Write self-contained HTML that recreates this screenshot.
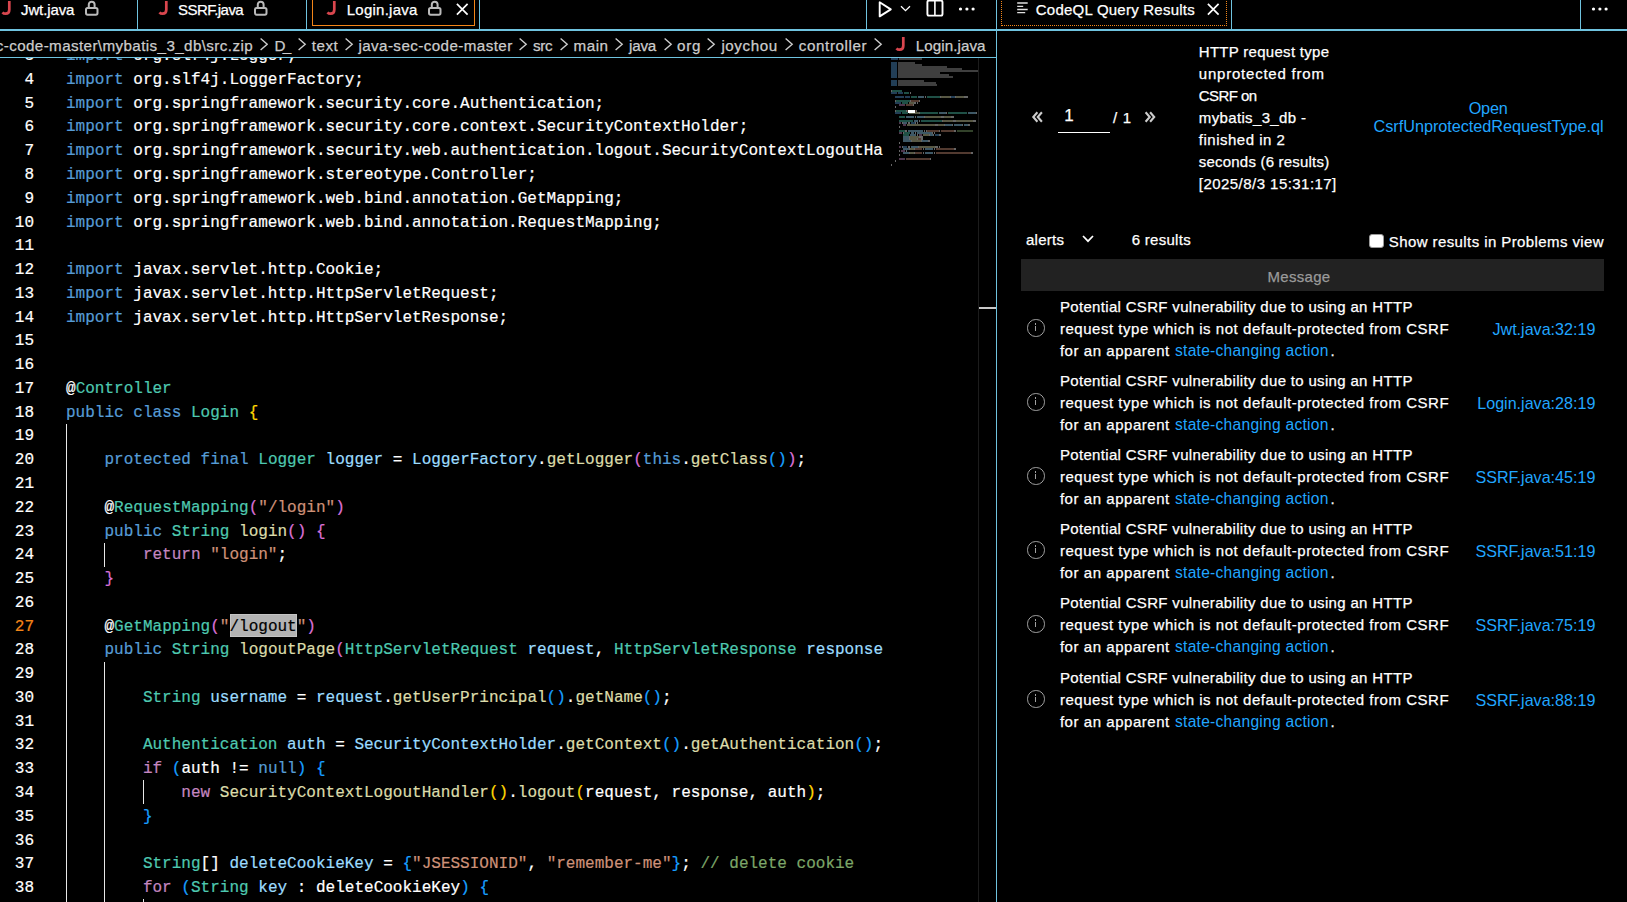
<!DOCTYPE html>
<html><head><meta charset="utf-8"><style>*{margin:0;padding:0;box-sizing:border-box}
html,body{width:1627px;height:902px;overflow:hidden;background:#000;font-family:"Liberation Sans",sans-serif;color:#fff}
.a{position:absolute}
.t{position:absolute;white-space:pre;-webkit-text-stroke:0.25px currentColor}
.ln{position:absolute;left:0;width:34px;text-align:right;font-family:"Liberation Mono",monospace;font-size:16.03px;line-height:23.75px;height:23.75px;white-space:pre;-webkit-text-stroke:0.2px currentColor}
.cl{position:absolute;left:66px;font-family:"Liberation Mono",monospace;font-size:16.03px;line-height:23.75px;height:23.75px;white-space:pre;-webkit-text-stroke:0.2px currentColor}
.sel{background:#B3B3B3;color:#000;box-shadow:inset 0 0 0 1px #C4C4C4}
.ig{position:absolute;width:1px;background:#E8E8E8}
#editor{position:absolute;left:0;top:58px;width:883px;height:844px;overflow:hidden}
#mm i{position:absolute;height:2px}
.dot{border:1px dotted #F38518}
.info{position:absolute;width:17.5px;height:17.5px;border:1.4px solid #a0a0a0;border-radius:50%}
.info:before{content:"";position:absolute;left:6.9px;top:5.8px;width:1.3px;height:5.5px;background:#a0a0a0}
.info:after{content:"";position:absolute;left:6.9px;top:3.3px;width:1.3px;height:1.3px;background:#a0a0a0}
</style></head><body>
<svg class="a" style="left:0.5px;top:0.0px" width="11" height="17" viewBox="0 0 11 17"><path d="M8.3 0.9V9.8Q8.3 13.7 4.6 13.7Q2.6 13.7 1.5 12.3" fill="none" stroke="#D9464E" stroke-width="2.7"/></svg>
<div class="t" style="left:21.00px;top:0.36px;font-size:15.0px;line-height:19px;letter-spacing:-0.114px;color:#fff;">Jwt.java</div>
<svg class="a" style="left:84.9px;top:0px" width="15" height="17" viewBox="0 0 15 17"><rect x="1" y="7.9" width="11.5" height="6.8" rx="1.6" fill="none" stroke="#BABABA" stroke-width="2"/><path d="M3.8 7.9V4.6A2.9 2.9 0 0 1 9.6 4.6V7.9" fill="none" stroke="#BABABA" stroke-width="2"/></svg>
<div class="a" style="left:137px;top:0px;width:1px;height:29px;background:#6FC3DF;"></div>
<svg class="a" style="left:157.5px;top:0.0px" width="11" height="17" viewBox="0 0 11 17"><path d="M8.3 0.9V9.8Q8.3 13.7 4.6 13.7Q2.6 13.7 1.5 12.3" fill="none" stroke="#D9464E" stroke-width="2.7"/></svg>
<div class="t" style="left:178.00px;top:0.36px;font-size:15.0px;line-height:19px;letter-spacing:-0.542px;color:#fff;">SSRF.java</div>
<svg class="a" style="left:253.5px;top:0px" width="15" height="17" viewBox="0 0 15 17"><rect x="1" y="7.9" width="11.5" height="6.8" rx="1.6" fill="none" stroke="#BABABA" stroke-width="2"/><path d="M3.8 7.9V4.6A2.9 2.9 0 0 1 9.6 4.6V7.9" fill="none" stroke="#BABABA" stroke-width="2"/></svg>
<div class="a" style="left:306px;top:0px;width:1px;height:29px;background:#6FC3DF;"></div>
<div class="a" style="left:312px;top:-2px;width:163px;height:28px;border:1px solid #F38518"></div>
<svg class="a" style="left:326.3px;top:0.0px" width="11" height="17" viewBox="0 0 11 17"><path d="M8.3 0.9V9.8Q8.3 13.7 4.6 13.7Q2.6 13.7 1.5 12.3" fill="none" stroke="#D9464E" stroke-width="2.7"/></svg>
<div class="t" style="left:346.70px;top:0.36px;font-size:15.0px;line-height:19px;letter-spacing:0.256px;color:#fff;">Login.java</div>
<svg class="a" style="left:427.8px;top:0px" width="15" height="17" viewBox="0 0 15 17"><rect x="1" y="7.9" width="11.5" height="6.8" rx="1.6" fill="none" stroke="#BABABA" stroke-width="2"/><path d="M3.8 7.9V4.6A2.9 2.9 0 0 1 9.6 4.6V7.9" fill="none" stroke="#BABABA" stroke-width="2"/></svg>
<svg class="a" style="left:455.5px;top:2.5px" width="13" height="13" viewBox="0 0 13 13"><path d="M0.9 0.9L11.6 11.6M11.6 0.9L0.9 11.6" stroke="#fff" stroke-width="1.7"/></svg>
<div class="a" style="left:479px;top:0px;width:1px;height:29px;background:#6FC3DF;"></div>
<div class="a" style="left:866px;top:0px;width:1px;height:29px;background:#6FC3DF;"></div>
<svg class="a" style="left:872px;top:0px" width="75" height="19" viewBox="0 0 75 19"><path d="M7.7 2.3V16.4L18.8 9.35Z" fill="none" stroke="#fff" stroke-width="1.9" stroke-linejoin="round"/><path d="M29 6.3L33.5 10.7L38 6.3" fill="none" stroke="#fff" stroke-width="1.3"/><rect x="55.4" y="0.6" width="15.1" height="15" rx="1.6" fill="none" stroke="#fff" stroke-width="1.9"/><path d="M62.9 0.6V15.6" stroke="#fff" stroke-width="1.6"/></svg>
<svg class="a" style="left:955px;top:5px" width="22" height="8" viewBox="0 0 22 8"><circle cx="5.5" cy="4" r="1.6" fill="#fff"/><circle cx="11.9" cy="4" r="1.6" fill="#fff"/><circle cx="18.1" cy="4" r="1.6" fill="#fff"/></svg>
<div class="a" style="left:0px;top:29px;width:1627px;height:2px;background:#6FC3DF;"></div>
<div class="t" style="left:-4.30px;top:36.23px;font-size:15.2px;line-height:19px;letter-spacing:0.393px;color:#CCCCCC;">c-code-master\mybatis_3_db\src.zip</div>
<div class="t" style="left:274.40px;top:36.23px;font-size:15.2px;line-height:19px;letter-spacing:-2.508px;color:#CCCCCC;">D_</div>
<div class="t" style="left:311.80px;top:36.23px;font-size:15.2px;line-height:19px;letter-spacing:0.499px;color:#CCCCCC;">text</div>
<div class="t" style="left:358.38px;top:36.23px;font-size:15.2px;line-height:19px;letter-spacing:0.415px;color:#CCCCCC;">java-sec-code-master</div>
<div class="t" style="left:533.00px;top:36.23px;font-size:15.2px;line-height:19px;letter-spacing:-0.281px;color:#CCCCCC;">src</div>
<div class="t" style="left:573.60px;top:36.23px;font-size:15.2px;line-height:19px;letter-spacing:0.482px;color:#CCCCCC;">main</div>
<div class="t" style="left:629.08px;top:36.23px;font-size:15.2px;line-height:19px;letter-spacing:-0.257px;color:#CCCCCC;">java</div>
<div class="t" style="left:676.90px;top:36.23px;font-size:15.2px;line-height:19px;letter-spacing:0.818px;color:#CCCCCC;">org</div>
<div class="t" style="left:721.38px;top:36.23px;font-size:15.2px;line-height:19px;letter-spacing:0.571px;color:#CCCCCC;">joychou</div>
<div class="t" style="left:798.80px;top:36.23px;font-size:15.2px;line-height:19px;letter-spacing:0.598px;color:#CCCCCC;">controller</div>
<div class="t" style="left:915.80px;top:36.23px;font-size:15.2px;line-height:19px;letter-spacing:0.054px;color:#CCCCCC;">Login.java</div>
<svg class="a" style="left:258.7px;top:36.8px" width="9.8" height="14.6" viewBox="-1 -1 9.8 14.6"><path d="M0.6 0.5L7.2 6.3L0.6 12.1" fill="none" stroke="#CCCCCC" stroke-width="1.4"/></svg>
<svg class="a" style="left:297px;top:36.8px" width="9.8" height="14.6" viewBox="-1 -1 9.8 14.6"><path d="M0.6 0.5L7.2 6.3L0.6 12.1" fill="none" stroke="#CCCCCC" stroke-width="1.4"/></svg>
<svg class="a" style="left:344.2px;top:36.8px" width="9.8" height="14.6" viewBox="-1 -1 9.8 14.6"><path d="M0.6 0.5L7.2 6.3L0.6 12.1" fill="none" stroke="#CCCCCC" stroke-width="1.4"/></svg>
<svg class="a" style="left:518.3px;top:36.8px" width="9.8" height="14.6" viewBox="-1 -1 9.8 14.6"><path d="M0.6 0.5L7.2 6.3L0.6 12.1" fill="none" stroke="#CCCCCC" stroke-width="1.4"/></svg>
<svg class="a" style="left:558.8px;top:36.8px" width="9.8" height="14.6" viewBox="-1 -1 9.8 14.6"><path d="M0.6 0.5L7.2 6.3L0.6 12.1" fill="none" stroke="#CCCCCC" stroke-width="1.4"/></svg>
<svg class="a" style="left:614px;top:36.8px" width="9.8" height="14.6" viewBox="-1 -1 9.8 14.6"><path d="M0.6 0.5L7.2 6.3L0.6 12.1" fill="none" stroke="#CCCCCC" stroke-width="1.4"/></svg>
<svg class="a" style="left:663px;top:36.8px" width="9.8" height="14.6" viewBox="-1 -1 9.8 14.6"><path d="M0.6 0.5L7.2 6.3L0.6 12.1" fill="none" stroke="#CCCCCC" stroke-width="1.4"/></svg>
<svg class="a" style="left:706.4px;top:36.8px" width="9.8" height="14.6" viewBox="-1 -1 9.8 14.6"><path d="M0.6 0.5L7.2 6.3L0.6 12.1" fill="none" stroke="#CCCCCC" stroke-width="1.4"/></svg>
<svg class="a" style="left:784px;top:36.8px" width="9.8" height="14.6" viewBox="-1 -1 9.8 14.6"><path d="M0.6 0.5L7.2 6.3L0.6 12.1" fill="none" stroke="#CCCCCC" stroke-width="1.4"/></svg>
<svg class="a" style="left:873.2px;top:36.8px" width="9.8" height="14.6" viewBox="-1 -1 9.8 14.6"><path d="M0.6 0.5L7.2 6.3L0.6 12.1" fill="none" stroke="#CCCCCC" stroke-width="1.4"/></svg>
<svg class="a" style="left:894.5px;top:36.0px" width="11" height="17" viewBox="0 0 11 17"><path d="M8.3 0.9V9.8Q8.3 13.7 4.6 13.7Q2.6 13.7 1.5 12.3" fill="none" stroke="#D9464E" stroke-width="2.7"/></svg>
<div class="a" style="left:0px;top:57px;width:996px;height:1px;background:#6FC3DF;"></div>
<div id="editor"><div style="position:absolute;left:0;top:-58px;width:884px;height:902px">
<div class="sel" style="position:absolute;left:230px;top:614px;width:67px;height:23px"></div>
<div class="ln" style="top:45.13px;color:#FFFFFF">3</div>
<div class="cl" style="top:45.13px"><span style="color:#569CD6">import</span><span style="color:#FFFFFF"> org.slf4j.Logger;</span></div>
<div class="ln" style="top:68.90px;color:#FFFFFF">4</div>
<div class="cl" style="top:68.90px"><span style="color:#569CD6">import</span><span style="color:#FFFFFF"> org.slf4j.LoggerFactory;</span></div>
<div class="ln" style="top:92.67px;color:#FFFFFF">5</div>
<div class="cl" style="top:92.67px"><span style="color:#569CD6">import</span><span style="color:#FFFFFF"> org.springframework.security.core.Authentication;</span></div>
<div class="ln" style="top:116.44px;color:#FFFFFF">6</div>
<div class="cl" style="top:116.44px"><span style="color:#569CD6">import</span><span style="color:#FFFFFF"> org.springframework.security.core.context.SecurityContextHolder;</span></div>
<div class="ln" style="top:140.21px;color:#FFFFFF">7</div>
<div class="cl" style="top:140.21px"><span style="color:#569CD6">import</span><span style="color:#FFFFFF"> org.springframework.security.web.authentication.logout.SecurityContextLogoutHandler;</span></div>
<div class="ln" style="top:163.98px;color:#FFFFFF">8</div>
<div class="cl" style="top:163.98px"><span style="color:#569CD6">import</span><span style="color:#FFFFFF"> org.springframework.stereotype.Controller;</span></div>
<div class="ln" style="top:187.75px;color:#FFFFFF">9</div>
<div class="cl" style="top:187.75px"><span style="color:#569CD6">import</span><span style="color:#FFFFFF"> org.springframework.web.bind.annotation.GetMapping;</span></div>
<div class="ln" style="top:211.52px;color:#FFFFFF">10</div>
<div class="cl" style="top:211.52px"><span style="color:#569CD6">import</span><span style="color:#FFFFFF"> org.springframework.web.bind.annotation.RequestMapping;</span></div>
<div class="ln" style="top:235.29px;color:#FFFFFF">11</div>
<div class="ln" style="top:259.06px;color:#FFFFFF">12</div>
<div class="cl" style="top:259.06px"><span style="color:#569CD6">import</span><span style="color:#FFFFFF"> javax.servlet.http.Cookie;</span></div>
<div class="ln" style="top:282.83px;color:#FFFFFF">13</div>
<div class="cl" style="top:282.83px"><span style="color:#569CD6">import</span><span style="color:#FFFFFF"> javax.servlet.http.HttpServletRequest;</span></div>
<div class="ln" style="top:306.60px;color:#FFFFFF">14</div>
<div class="cl" style="top:306.60px"><span style="color:#569CD6">import</span><span style="color:#FFFFFF"> javax.servlet.http.HttpServletResponse;</span></div>
<div class="ln" style="top:330.37px;color:#FFFFFF">15</div>
<div class="ln" style="top:354.14px;color:#FFFFFF">16</div>
<div class="ln" style="top:377.91px;color:#FFFFFF">17</div>
<div class="cl" style="top:377.91px"><span style="color:#FFFFFF">@</span><span style="color:#4EC9B0">Controller</span></div>
<div class="ln" style="top:401.68px;color:#FFFFFF">18</div>
<div class="cl" style="top:401.68px"><span style="color:#569CD6">public</span><span style="color:#FFFFFF"> </span><span style="color:#569CD6">class</span><span style="color:#FFFFFF"> </span><span style="color:#4EC9B0">Login</span><span style="color:#FFFFFF"> </span><span style="color:#FFD700">{</span></div>
<div class="ln" style="top:425.45px;color:#FFFFFF">19</div>
<div class="ln" style="top:449.22px;color:#FFFFFF">20</div>
<div class="cl" style="top:449.22px"><span style="color:#FFFFFF">    </span><span style="color:#569CD6">protected</span><span style="color:#FFFFFF"> </span><span style="color:#569CD6">final</span><span style="color:#FFFFFF"> </span><span style="color:#4EC9B0">Logger</span><span style="color:#FFFFFF"> </span><span style="color:#9CDCFE">logger</span><span style="color:#FFFFFF"> = </span><span style="color:#9CDCFE">LoggerFactory</span><span style="color:#FFFFFF">.</span><span style="color:#DCDCAA">getLogger</span><span style="color:#DA70D6">(</span><span style="color:#569CD6">this</span><span style="color:#FFFFFF">.</span><span style="color:#DCDCAA">getClass</span><span style="color:#179FFF">()</span><span style="color:#DA70D6">)</span><span style="color:#FFFFFF">;</span></div>
<div class="ln" style="top:472.99px;color:#FFFFFF">21</div>
<div class="ln" style="top:496.76px;color:#FFFFFF">22</div>
<div class="cl" style="top:496.76px"><span style="color:#FFFFFF">    </span><span style="color:#FFFFFF">@</span><span style="color:#4EC9B0">RequestMapping</span><span style="color:#DA70D6">(</span><span style="color:#CE9178">&quot;/login&quot;</span><span style="color:#DA70D6">)</span></div>
<div class="ln" style="top:520.53px;color:#FFFFFF">23</div>
<div class="cl" style="top:520.53px"><span style="color:#FFFFFF">    </span><span style="color:#569CD6">public</span><span style="color:#FFFFFF"> </span><span style="color:#4EC9B0">String</span><span style="color:#FFFFFF"> </span><span style="color:#DCDCAA">login</span><span style="color:#DA70D6">()</span><span style="color:#FFFFFF"> </span><span style="color:#DA70D6">{</span></div>
<div class="ln" style="top:544.30px;color:#FFFFFF">24</div>
<div class="cl" style="top:544.30px"><span style="color:#FFFFFF">        </span><span style="color:#C586C0">return</span><span style="color:#FFFFFF"> </span><span style="color:#CE9178">&quot;login&quot;</span><span style="color:#FFFFFF">;</span></div>
<div class="ln" style="top:568.07px;color:#FFFFFF">25</div>
<div class="cl" style="top:568.07px"><span style="color:#FFFFFF">    </span><span style="color:#DA70D6">}</span></div>
<div class="ln" style="top:591.84px;color:#FFFFFF">26</div>
<div class="ln" style="top:615.61px;color:#F38518">27</div>
<div class="cl" style="top:615.61px"><span style="color:#FFFFFF">    </span><span style="color:#FFFFFF">@</span><span style="color:#4EC9B0">GetMapping</span><span style="color:#DA70D6">(</span><span style="color:#CE9178">&quot;</span><span style="color:#000">/logout</span><span style="color:#CE9178">&quot;</span><span style="color:#DA70D6">)</span></div>
<div class="ln" style="top:639.38px;color:#FFFFFF">28</div>
<div class="cl" style="top:639.38px"><span style="color:#FFFFFF">    </span><span style="color:#569CD6">public</span><span style="color:#FFFFFF"> </span><span style="color:#4EC9B0">String</span><span style="color:#FFFFFF"> </span><span style="color:#DCDCAA">logoutPage</span><span style="color:#DA70D6">(</span><span style="color:#4EC9B0">HttpServletRequest</span><span style="color:#FFFFFF"> </span><span style="color:#9CDCFE">request</span><span style="color:#FFFFFF">, </span><span style="color:#4EC9B0">HttpServletResponse</span><span style="color:#FFFFFF"> </span><span style="color:#9CDCFE">response</span><span style="color:#DA70D6">)</span><span style="color:#FFFFFF"> </span><span style="color:#DA70D6">{</span></div>
<div class="ln" style="top:663.15px;color:#FFFFFF">29</div>
<div class="ln" style="top:686.92px;color:#FFFFFF">30</div>
<div class="cl" style="top:686.92px"><span style="color:#FFFFFF">        </span><span style="color:#4EC9B0">String</span><span style="color:#FFFFFF"> </span><span style="color:#9CDCFE">username</span><span style="color:#FFFFFF"> = </span><span style="color:#9CDCFE">request</span><span style="color:#FFFFFF">.</span><span style="color:#DCDCAA">getUserPrincipal</span><span style="color:#179FFF">()</span><span style="color:#FFFFFF">.</span><span style="color:#DCDCAA">getName</span><span style="color:#179FFF">()</span><span style="color:#FFFFFF">;</span></div>
<div class="ln" style="top:710.69px;color:#FFFFFF">31</div>
<div class="ln" style="top:734.46px;color:#FFFFFF">32</div>
<div class="cl" style="top:734.46px"><span style="color:#FFFFFF">        </span><span style="color:#4EC9B0">Authentication</span><span style="color:#FFFFFF"> </span><span style="color:#9CDCFE">auth</span><span style="color:#FFFFFF"> = </span><span style="color:#9CDCFE">SecurityContextHolder</span><span style="color:#FFFFFF">.</span><span style="color:#DCDCAA">getContext</span><span style="color:#179FFF">()</span><span style="color:#FFFFFF">.</span><span style="color:#DCDCAA">getAuthentication</span><span style="color:#179FFF">()</span><span style="color:#FFFFFF">;</span></div>
<div class="ln" style="top:758.23px;color:#FFFFFF">33</div>
<div class="cl" style="top:758.23px"><span style="color:#FFFFFF">        </span><span style="color:#C586C0">if</span><span style="color:#FFFFFF"> </span><span style="color:#179FFF">(</span><span style="color:#FFFFFF">auth != </span><span style="color:#569CD6">null</span><span style="color:#179FFF">)</span><span style="color:#FFFFFF"> </span><span style="color:#179FFF">{</span></div>
<div class="ln" style="top:782.00px;color:#FFFFFF">34</div>
<div class="cl" style="top:782.00px"><span style="color:#FFFFFF">            </span><span style="color:#C586C0">new</span><span style="color:#FFFFFF"> </span><span style="color:#DCDCAA">SecurityContextLogoutHandler</span><span style="color:#FFD700">()</span><span style="color:#FFFFFF">.</span><span style="color:#DCDCAA">logout</span><span style="color:#FFD700">(</span><span style="color:#FFFFFF">request, response, auth</span><span style="color:#FFD700">)</span><span style="color:#FFFFFF">;</span></div>
<div class="ln" style="top:805.77px;color:#FFFFFF">35</div>
<div class="cl" style="top:805.77px"><span style="color:#FFFFFF">        </span><span style="color:#179FFF">}</span></div>
<div class="ln" style="top:829.54px;color:#FFFFFF">36</div>
<div class="ln" style="top:853.31px;color:#FFFFFF">37</div>
<div class="cl" style="top:853.31px"><span style="color:#FFFFFF">        </span><span style="color:#4EC9B0">String</span><span style="color:#FFFFFF">[] </span><span style="color:#9CDCFE">deleteCookieKey</span><span style="color:#FFFFFF"> = </span><span style="color:#179FFF">{</span><span style="color:#CE9178">&quot;JSESSIONID&quot;</span><span style="color:#FFFFFF">, </span><span style="color:#CE9178">&quot;remember-me&quot;</span><span style="color:#179FFF">}</span><span style="color:#FFFFFF">; </span><span style="color:#7CA668">// delete cookie</span></div>
<div class="ln" style="top:877.08px;color:#FFFFFF">38</div>
<div class="cl" style="top:877.08px"><span style="color:#FFFFFF">        </span><span style="color:#C586C0">for</span><span style="color:#FFFFFF"> </span><span style="color:#179FFF">(</span><span style="color:#4EC9B0">String</span><span style="color:#FFFFFF"> </span><span style="color:#9CDCFE">key</span><span style="color:#FFFFFF"> : </span><span style="color:#FFFFFF">deleteCookieKey</span><span style="color:#179FFF">)</span><span style="color:#FFFFFF"> </span><span style="color:#179FFF">{</span></div>
<div class="ln" style="top:900.85px;color:#FFFFFF">39</div>
<div class="cl" style="top:900.85px"><span style="color:#FFFFFF">            </span><span style="color:#4EC9B0">Cookie</span><span style="color:#FFFFFF"> </span><span style="color:#9CDCFE">cookie</span><span style="color:#FFFFFF"> = </span><span style="color:#C586C0">new</span><span style="color:#FFFFFF"> </span><span style="color:#DCDCAA">Cookie</span><span style="color:#FFD700">(</span><span style="color:#FFFFFF">key, </span><span style="color:#569CD6">null</span><span style="color:#FFD700">)</span><span style="color:#FFFFFF">;</span></div>
<div class="ig" style="left:66px;top:424px;height:478px"></div>
<div class="ig" style="left:104px;top:543px;height:24px"></div>
<div class="ig" style="left:104px;top:662px;height:240px"></div>
<div class="ig" style="left:143px;top:780px;height:24px"></div>
<div class="ig" style="left:143px;top:899px;height:3px"></div>
</div></div>
<div id="mm"><i style="left:891px;top:58px;width:7px;background:#569CD6;opacity:0.4"></i><i style="left:899px;top:58px;width:3px;background:#d0d0d0;opacity:0.3"></i><i style="left:902px;top:58px;width:1px;background:#d0d0d0;opacity:0.3"></i><i style="left:903px;top:58px;width:7px;background:#d0d0d0;opacity:0.3"></i><i style="left:910px;top:58px;width:1px;background:#d0d0d0;opacity:0.3"></i><i style="left:911px;top:58px;width:10px;background:#d0d0d0;opacity:0.3"></i><i style="left:921px;top:58px;width:1px;background:#d0d0d0;opacity:0.3"></i><i style="left:891px;top:62px;width:6px;background:#569CD6;opacity:0.4"></i><i style="left:898px;top:62px;width:3px;background:#d0d0d0;opacity:0.3"></i><i style="left:901px;top:62px;width:1px;background:#d0d0d0;opacity:0.3"></i><i style="left:902px;top:62px;width:5px;background:#d0d0d0;opacity:0.3"></i><i style="left:907px;top:62px;width:1px;background:#d0d0d0;opacity:0.3"></i><i style="left:908px;top:62px;width:6px;background:#d0d0d0;opacity:0.3"></i><i style="left:914px;top:62px;width:1px;background:#d0d0d0;opacity:0.3"></i><i style="left:891px;top:64px;width:6px;background:#569CD6;opacity:0.4"></i><i style="left:898px;top:64px;width:3px;background:#d0d0d0;opacity:0.3"></i><i style="left:901px;top:64px;width:1px;background:#d0d0d0;opacity:0.3"></i><i style="left:902px;top:64px;width:5px;background:#d0d0d0;opacity:0.3"></i><i style="left:907px;top:64px;width:1px;background:#d0d0d0;opacity:0.3"></i><i style="left:908px;top:64px;width:13px;background:#d0d0d0;opacity:0.3"></i><i style="left:921px;top:64px;width:1px;background:#d0d0d0;opacity:0.3"></i><i style="left:891px;top:66px;width:6px;background:#569CD6;opacity:0.4"></i><i style="left:898px;top:66px;width:3px;background:#d0d0d0;opacity:0.3"></i><i style="left:901px;top:66px;width:1px;background:#d0d0d0;opacity:0.3"></i><i style="left:902px;top:66px;width:15px;background:#d0d0d0;opacity:0.3"></i><i style="left:917px;top:66px;width:1px;background:#d0d0d0;opacity:0.3"></i><i style="left:918px;top:66px;width:8px;background:#d0d0d0;opacity:0.3"></i><i style="left:926px;top:66px;width:1px;background:#d0d0d0;opacity:0.3"></i><i style="left:927px;top:66px;width:4px;background:#d0d0d0;opacity:0.3"></i><i style="left:931px;top:66px;width:1px;background:#d0d0d0;opacity:0.3"></i><i style="left:932px;top:66px;width:14px;background:#d0d0d0;opacity:0.3"></i><i style="left:946px;top:66px;width:1px;background:#d0d0d0;opacity:0.3"></i><i style="left:891px;top:68px;width:6px;background:#569CD6;opacity:0.4"></i><i style="left:898px;top:68px;width:3px;background:#d0d0d0;opacity:0.3"></i><i style="left:901px;top:68px;width:1px;background:#d0d0d0;opacity:0.3"></i><i style="left:902px;top:68px;width:15px;background:#d0d0d0;opacity:0.3"></i><i style="left:917px;top:68px;width:1px;background:#d0d0d0;opacity:0.3"></i><i style="left:918px;top:68px;width:8px;background:#d0d0d0;opacity:0.3"></i><i style="left:926px;top:68px;width:1px;background:#d0d0d0;opacity:0.3"></i><i style="left:927px;top:68px;width:4px;background:#d0d0d0;opacity:0.3"></i><i style="left:931px;top:68px;width:1px;background:#d0d0d0;opacity:0.3"></i><i style="left:932px;top:68px;width:7px;background:#d0d0d0;opacity:0.3"></i><i style="left:939px;top:68px;width:1px;background:#d0d0d0;opacity:0.3"></i><i style="left:940px;top:68px;width:21px;background:#d0d0d0;opacity:0.3"></i><i style="left:961px;top:68px;width:1px;background:#d0d0d0;opacity:0.3"></i><i style="left:891px;top:70px;width:6px;background:#569CD6;opacity:0.4"></i><i style="left:898px;top:70px;width:3px;background:#d0d0d0;opacity:0.3"></i><i style="left:901px;top:70px;width:1px;background:#d0d0d0;opacity:0.3"></i><i style="left:902px;top:70px;width:15px;background:#d0d0d0;opacity:0.3"></i><i style="left:917px;top:70px;width:1px;background:#d0d0d0;opacity:0.3"></i><i style="left:918px;top:70px;width:8px;background:#d0d0d0;opacity:0.3"></i><i style="left:926px;top:70px;width:1px;background:#d0d0d0;opacity:0.3"></i><i style="left:927px;top:70px;width:3px;background:#d0d0d0;opacity:0.3"></i><i style="left:930px;top:70px;width:1px;background:#d0d0d0;opacity:0.3"></i><i style="left:931px;top:70px;width:14px;background:#d0d0d0;opacity:0.3"></i><i style="left:945px;top:70px;width:1px;background:#d0d0d0;opacity:0.3"></i><i style="left:946px;top:70px;width:6px;background:#d0d0d0;opacity:0.3"></i><i style="left:952px;top:70px;width:1px;background:#d0d0d0;opacity:0.3"></i><i style="left:953px;top:70px;width:25px;background:#d0d0d0;opacity:0.3"></i><i style="left:891px;top:72px;width:6px;background:#569CD6;opacity:0.4"></i><i style="left:898px;top:72px;width:3px;background:#d0d0d0;opacity:0.3"></i><i style="left:901px;top:72px;width:1px;background:#d0d0d0;opacity:0.3"></i><i style="left:902px;top:72px;width:15px;background:#d0d0d0;opacity:0.3"></i><i style="left:917px;top:72px;width:1px;background:#d0d0d0;opacity:0.3"></i><i style="left:918px;top:72px;width:10px;background:#d0d0d0;opacity:0.3"></i><i style="left:928px;top:72px;width:1px;background:#d0d0d0;opacity:0.3"></i><i style="left:929px;top:72px;width:10px;background:#d0d0d0;opacity:0.3"></i><i style="left:939px;top:72px;width:1px;background:#d0d0d0;opacity:0.3"></i><i style="left:891px;top:74px;width:6px;background:#569CD6;opacity:0.4"></i><i style="left:898px;top:74px;width:3px;background:#d0d0d0;opacity:0.3"></i><i style="left:901px;top:74px;width:1px;background:#d0d0d0;opacity:0.3"></i><i style="left:902px;top:74px;width:15px;background:#d0d0d0;opacity:0.3"></i><i style="left:917px;top:74px;width:1px;background:#d0d0d0;opacity:0.3"></i><i style="left:918px;top:74px;width:3px;background:#d0d0d0;opacity:0.3"></i><i style="left:921px;top:74px;width:1px;background:#d0d0d0;opacity:0.3"></i><i style="left:922px;top:74px;width:4px;background:#d0d0d0;opacity:0.3"></i><i style="left:926px;top:74px;width:1px;background:#d0d0d0;opacity:0.3"></i><i style="left:927px;top:74px;width:10px;background:#d0d0d0;opacity:0.3"></i><i style="left:937px;top:74px;width:1px;background:#d0d0d0;opacity:0.3"></i><i style="left:938px;top:74px;width:10px;background:#d0d0d0;opacity:0.3"></i><i style="left:948px;top:74px;width:1px;background:#d0d0d0;opacity:0.3"></i><i style="left:891px;top:76px;width:6px;background:#569CD6;opacity:0.4"></i><i style="left:898px;top:76px;width:3px;background:#d0d0d0;opacity:0.3"></i><i style="left:901px;top:76px;width:1px;background:#d0d0d0;opacity:0.3"></i><i style="left:902px;top:76px;width:15px;background:#d0d0d0;opacity:0.3"></i><i style="left:917px;top:76px;width:1px;background:#d0d0d0;opacity:0.3"></i><i style="left:918px;top:76px;width:3px;background:#d0d0d0;opacity:0.3"></i><i style="left:921px;top:76px;width:1px;background:#d0d0d0;opacity:0.3"></i><i style="left:922px;top:76px;width:4px;background:#d0d0d0;opacity:0.3"></i><i style="left:926px;top:76px;width:1px;background:#d0d0d0;opacity:0.3"></i><i style="left:927px;top:76px;width:10px;background:#d0d0d0;opacity:0.3"></i><i style="left:937px;top:76px;width:1px;background:#d0d0d0;opacity:0.3"></i><i style="left:938px;top:76px;width:14px;background:#d0d0d0;opacity:0.3"></i><i style="left:952px;top:76px;width:1px;background:#d0d0d0;opacity:0.3"></i><i style="left:891px;top:80px;width:6px;background:#569CD6;opacity:0.4"></i><i style="left:898px;top:80px;width:5px;background:#d0d0d0;opacity:0.3"></i><i style="left:903px;top:80px;width:1px;background:#d0d0d0;opacity:0.3"></i><i style="left:904px;top:80px;width:7px;background:#d0d0d0;opacity:0.3"></i><i style="left:911px;top:80px;width:1px;background:#d0d0d0;opacity:0.3"></i><i style="left:912px;top:80px;width:4px;background:#d0d0d0;opacity:0.3"></i><i style="left:916px;top:80px;width:1px;background:#d0d0d0;opacity:0.3"></i><i style="left:917px;top:80px;width:6px;background:#d0d0d0;opacity:0.3"></i><i style="left:923px;top:80px;width:1px;background:#d0d0d0;opacity:0.3"></i><i style="left:891px;top:82px;width:6px;background:#569CD6;opacity:0.4"></i><i style="left:898px;top:82px;width:5px;background:#d0d0d0;opacity:0.3"></i><i style="left:903px;top:82px;width:1px;background:#d0d0d0;opacity:0.3"></i><i style="left:904px;top:82px;width:7px;background:#d0d0d0;opacity:0.3"></i><i style="left:911px;top:82px;width:1px;background:#d0d0d0;opacity:0.3"></i><i style="left:912px;top:82px;width:4px;background:#d0d0d0;opacity:0.3"></i><i style="left:916px;top:82px;width:1px;background:#d0d0d0;opacity:0.3"></i><i style="left:917px;top:82px;width:18px;background:#d0d0d0;opacity:0.3"></i><i style="left:935px;top:82px;width:1px;background:#d0d0d0;opacity:0.3"></i><i style="left:891px;top:84px;width:6px;background:#569CD6;opacity:0.4"></i><i style="left:898px;top:84px;width:5px;background:#d0d0d0;opacity:0.3"></i><i style="left:903px;top:84px;width:1px;background:#d0d0d0;opacity:0.3"></i><i style="left:904px;top:84px;width:7px;background:#d0d0d0;opacity:0.3"></i><i style="left:911px;top:84px;width:1px;background:#d0d0d0;opacity:0.3"></i><i style="left:912px;top:84px;width:4px;background:#d0d0d0;opacity:0.3"></i><i style="left:916px;top:84px;width:1px;background:#d0d0d0;opacity:0.3"></i><i style="left:917px;top:84px;width:19px;background:#d0d0d0;opacity:0.3"></i><i style="left:936px;top:84px;width:1px;background:#d0d0d0;opacity:0.3"></i><i style="left:891px;top:90px;width:1px;background:#ffffff;opacity:0.4"></i><i style="left:892px;top:90px;width:10px;background:#4EC9B0;opacity:0.4"></i><i style="left:891px;top:92px;width:6px;background:#569CD6;opacity:0.4"></i><i style="left:898px;top:92px;width:5px;background:#569CD6;opacity:0.4"></i><i style="left:904px;top:92px;width:5px;background:#4EC9B0;opacity:0.4"></i><i style="left:910px;top:92px;width:1px;background:#ffffff;opacity:0.4"></i><i style="left:895px;top:96px;width:9px;background:#569CD6;opacity:0.4"></i><i style="left:905px;top:96px;width:5px;background:#569CD6;opacity:0.4"></i><i style="left:911px;top:96px;width:6px;background:#4EC9B0;opacity:0.4"></i><i style="left:918px;top:96px;width:6px;background:#9CDCFE;opacity:0.4"></i><i style="left:925px;top:96px;width:1px;background:#ffffff;opacity:0.4"></i><i style="left:927px;top:96px;width:13px;background:#4EC9B0;opacity:0.4"></i><i style="left:940px;top:96px;width:1px;background:#ffffff;opacity:0.4"></i><i style="left:941px;top:96px;width:9px;background:#DCDCAA;opacity:0.4"></i><i style="left:950px;top:96px;width:1px;background:#ffffff;opacity:0.4"></i><i style="left:951px;top:96px;width:4px;background:#569CD6;opacity:0.4"></i><i style="left:955px;top:96px;width:1px;background:#ffffff;opacity:0.4"></i><i style="left:956px;top:96px;width:8px;background:#DCDCAA;opacity:0.4"></i><i style="left:964px;top:96px;width:4px;background:#ffffff;opacity:0.4"></i><i style="left:895px;top:100px;width:1px;background:#ffffff;opacity:0.4"></i><i style="left:896px;top:100px;width:14px;background:#4EC9B0;opacity:0.4"></i><i style="left:910px;top:100px;width:1px;background:#ffffff;opacity:0.4"></i><i style="left:911px;top:100px;width:8px;background:#CE9178;opacity:0.4"></i><i style="left:919px;top:100px;width:1px;background:#ffffff;opacity:0.4"></i><i style="left:895px;top:102px;width:6px;background:#569CD6;opacity:0.4"></i><i style="left:902px;top:102px;width:6px;background:#4EC9B0;opacity:0.4"></i><i style="left:909px;top:102px;width:5px;background:#DCDCAA;opacity:0.4"></i><i style="left:914px;top:102px;width:2px;background:#ffffff;opacity:0.4"></i><i style="left:917px;top:102px;width:1px;background:#ffffff;opacity:0.4"></i><i style="left:899px;top:104px;width:6px;background:#C586C0;opacity:0.4"></i><i style="left:906px;top:104px;width:7px;background:#CE9178;opacity:0.4"></i><i style="left:913px;top:104px;width:1px;background:#ffffff;opacity:0.4"></i><i style="left:895px;top:106px;width:1px;background:#ffffff;opacity:0.4"></i><i style="left:895px;top:110px;width:1px;background:#ffffff;opacity:0.4"></i><i style="left:896px;top:110px;width:10px;background:#4EC9B0;opacity:0.4"></i><i style="left:906px;top:110px;width:1px;background:#ffffff;opacity:0.4"></i><i style="left:907px;top:110px;width:9px;background:#CE9178;opacity:0.4"></i><i style="left:916px;top:110px;width:1px;background:#ffffff;opacity:0.4"></i><i style="left:895px;top:112px;width:6px;background:#569CD6;opacity:0.4"></i><i style="left:902px;top:112px;width:6px;background:#4EC9B0;opacity:0.4"></i><i style="left:909px;top:112px;width:10px;background:#DCDCAA;opacity:0.4"></i><i style="left:919px;top:112px;width:1px;background:#ffffff;opacity:0.4"></i><i style="left:920px;top:112px;width:18px;background:#4EC9B0;opacity:0.4"></i><i style="left:939px;top:112px;width:7px;background:#9CDCFE;opacity:0.4"></i><i style="left:946px;top:112px;width:1px;background:#ffffff;opacity:0.4"></i><i style="left:948px;top:112px;width:19px;background:#4EC9B0;opacity:0.4"></i><i style="left:968px;top:112px;width:8px;background:#9CDCFE;opacity:0.4"></i><i style="left:976px;top:112px;width:1px;background:#ffffff;opacity:0.4"></i><i style="left:899px;top:116px;width:6px;background:#4EC9B0;opacity:0.4"></i><i style="left:906px;top:116px;width:8px;background:#9CDCFE;opacity:0.4"></i><i style="left:915px;top:116px;width:1px;background:#ffffff;opacity:0.4"></i><i style="left:917px;top:116px;width:7px;background:#9CDCFE;opacity:0.4"></i><i style="left:924px;top:116px;width:1px;background:#ffffff;opacity:0.4"></i><i style="left:925px;top:116px;width:16px;background:#DCDCAA;opacity:0.4"></i><i style="left:941px;top:116px;width:3px;background:#ffffff;opacity:0.4"></i><i style="left:944px;top:116px;width:7px;background:#DCDCAA;opacity:0.4"></i><i style="left:951px;top:116px;width:3px;background:#ffffff;opacity:0.4"></i><i style="left:899px;top:120px;width:14px;background:#4EC9B0;opacity:0.4"></i><i style="left:914px;top:120px;width:4px;background:#9CDCFE;opacity:0.4"></i><i style="left:919px;top:120px;width:1px;background:#ffffff;opacity:0.4"></i><i style="left:921px;top:120px;width:21px;background:#4EC9B0;opacity:0.4"></i><i style="left:942px;top:120px;width:1px;background:#ffffff;opacity:0.4"></i><i style="left:943px;top:120px;width:10px;background:#DCDCAA;opacity:0.4"></i><i style="left:953px;top:120px;width:3px;background:#ffffff;opacity:0.4"></i><i style="left:956px;top:120px;width:17px;background:#DCDCAA;opacity:0.4"></i><i style="left:973px;top:120px;width:3px;background:#ffffff;opacity:0.4"></i><i style="left:899px;top:122px;width:2px;background:#C586C0;opacity:0.4"></i><i style="left:902px;top:122px;width:1px;background:#ffffff;opacity:0.4"></i><i style="left:903px;top:122px;width:4px;background:#9CDCFE;opacity:0.4"></i><i style="left:908px;top:122px;width:2px;background:#ffffff;opacity:0.4"></i><i style="left:911px;top:122px;width:4px;background:#569CD6;opacity:0.4"></i><i style="left:915px;top:122px;width:1px;background:#ffffff;opacity:0.4"></i><i style="left:917px;top:122px;width:1px;background:#ffffff;opacity:0.4"></i><i style="left:903px;top:124px;width:3px;background:#C586C0;opacity:0.4"></i><i style="left:907px;top:124px;width:28px;background:#DCDCAA;opacity:0.4"></i><i style="left:935px;top:124px;width:3px;background:#ffffff;opacity:0.4"></i><i style="left:938px;top:124px;width:6px;background:#DCDCAA;opacity:0.4"></i><i style="left:944px;top:124px;width:1px;background:#ffffff;opacity:0.4"></i><i style="left:945px;top:124px;width:7px;background:#9CDCFE;opacity:0.4"></i><i style="left:952px;top:124px;width:1px;background:#ffffff;opacity:0.4"></i><i style="left:954px;top:124px;width:8px;background:#9CDCFE;opacity:0.4"></i><i style="left:962px;top:124px;width:1px;background:#ffffff;opacity:0.4"></i><i style="left:964px;top:124px;width:4px;background:#9CDCFE;opacity:0.4"></i><i style="left:968px;top:124px;width:2px;background:#ffffff;opacity:0.4"></i><i style="left:899px;top:126px;width:1px;background:#ffffff;opacity:0.4"></i><i style="left:899px;top:130px;width:6px;background:#4EC9B0;opacity:0.4"></i><i style="left:905px;top:130px;width:2px;background:#ffffff;opacity:0.4"></i><i style="left:908px;top:130px;width:15px;background:#9CDCFE;opacity:0.4"></i><i style="left:924px;top:130px;width:1px;background:#ffffff;opacity:0.4"></i><i style="left:926px;top:130px;width:1px;background:#ffffff;opacity:0.4"></i><i style="left:927px;top:130px;width:12px;background:#CE9178;opacity:0.4"></i><i style="left:939px;top:130px;width:1px;background:#ffffff;opacity:0.4"></i><i style="left:941px;top:130px;width:13px;background:#CE9178;opacity:0.4"></i><i style="left:954px;top:130px;width:2px;background:#ffffff;opacity:0.4"></i><i style="left:957px;top:130px;width:16px;background:#7CA668;opacity:0.4"></i><i style="left:899px;top:132px;width:3px;background:#C586C0;opacity:0.4"></i><i style="left:903px;top:132px;width:1px;background:#ffffff;opacity:0.4"></i><i style="left:904px;top:132px;width:6px;background:#4EC9B0;opacity:0.4"></i><i style="left:911px;top:132px;width:3px;background:#9CDCFE;opacity:0.4"></i><i style="left:915px;top:132px;width:1px;background:#ffffff;opacity:0.4"></i><i style="left:917px;top:132px;width:15px;background:#9CDCFE;opacity:0.4"></i><i style="left:932px;top:132px;width:1px;background:#ffffff;opacity:0.4"></i><i style="left:934px;top:132px;width:1px;background:#ffffff;opacity:0.4"></i><i style="left:903px;top:134px;width:6px;background:#4EC9B0;opacity:0.4"></i><i style="left:910px;top:134px;width:6px;background:#9CDCFE;opacity:0.4"></i><i style="left:917px;top:134px;width:1px;background:#ffffff;opacity:0.4"></i><i style="left:919px;top:134px;width:3px;background:#C586C0;opacity:0.4"></i><i style="left:923px;top:134px;width:6px;background:#DCDCAA;opacity:0.4"></i><i style="left:929px;top:134px;width:1px;background:#ffffff;opacity:0.4"></i><i style="left:930px;top:134px;width:3px;background:#9CDCFE;opacity:0.4"></i><i style="left:933px;top:134px;width:1px;background:#ffffff;opacity:0.4"></i><i style="left:935px;top:134px;width:4px;background:#569CD6;opacity:0.4"></i><i style="left:939px;top:134px;width:2px;background:#ffffff;opacity:0.4"></i><i style="left:903px;top:136px;width:6px;background:#9CDCFE;opacity:0.4"></i><i style="left:909px;top:136px;width:1px;background:#ffffff;opacity:0.4"></i><i style="left:910px;top:136px;width:9px;background:#DCDCAA;opacity:0.4"></i><i style="left:919px;top:136px;width:4px;background:#ffffff;opacity:0.4"></i><i style="left:903px;top:138px;width:6px;background:#9CDCFE;opacity:0.4"></i><i style="left:909px;top:138px;width:1px;background:#ffffff;opacity:0.4"></i><i style="left:910px;top:138px;width:7px;background:#DCDCAA;opacity:0.4"></i><i style="left:917px;top:138px;width:1px;background:#ffffff;opacity:0.4"></i><i style="left:918px;top:138px;width:3px;background:#CE9178;opacity:0.4"></i><i style="left:921px;top:138px;width:2px;background:#ffffff;opacity:0.4"></i><i style="left:903px;top:140px;width:8px;background:#9CDCFE;opacity:0.4"></i><i style="left:911px;top:140px;width:1px;background:#ffffff;opacity:0.4"></i><i style="left:912px;top:140px;width:9px;background:#DCDCAA;opacity:0.4"></i><i style="left:921px;top:140px;width:1px;background:#ffffff;opacity:0.4"></i><i style="left:922px;top:140px;width:6px;background:#9CDCFE;opacity:0.4"></i><i style="left:928px;top:140px;width:2px;background:#ffffff;opacity:0.4"></i><i style="left:899px;top:142px;width:1px;background:#ffffff;opacity:0.4"></i><i style="left:899px;top:146px;width:2px;background:#C586C0;opacity:0.4"></i><i style="left:902px;top:146px;width:1px;background:#ffffff;opacity:0.4"></i><i style="left:903px;top:146px;width:4px;background:#569CD6;opacity:0.4"></i><i style="left:908px;top:146px;width:2px;background:#ffffff;opacity:0.4"></i><i style="left:911px;top:146px;width:7px;background:#9CDCFE;opacity:0.4"></i><i style="left:918px;top:146px;width:1px;background:#ffffff;opacity:0.4"></i><i style="left:919px;top:146px;width:16px;background:#DCDCAA;opacity:0.4"></i><i style="left:935px;top:146px;width:3px;background:#ffffff;opacity:0.4"></i><i style="left:939px;top:146px;width:1px;background:#ffffff;opacity:0.4"></i><i style="left:903px;top:148px;width:6px;background:#9CDCFE;opacity:0.4"></i><i style="left:909px;top:148px;width:1px;background:#ffffff;opacity:0.4"></i><i style="left:910px;top:148px;width:4px;background:#DCDCAA;opacity:0.4"></i><i style="left:914px;top:148px;width:1px;background:#ffffff;opacity:0.4"></i><i style="left:915px;top:148px;width:7px;background:#CE9178;opacity:0.4"></i><i style="left:923px;top:148px;width:1px;background:#ffffff;opacity:0.4"></i><i style="left:925px;top:148px;width:8px;background:#9CDCFE;opacity:0.4"></i><i style="left:934px;top:148px;width:1px;background:#ffffff;opacity:0.4"></i><i style="left:936px;top:148px;width:18px;background:#CE9178;opacity:0.4"></i><i style="left:954px;top:148px;width:2px;background:#ffffff;opacity:0.4"></i><i style="left:899px;top:150px;width:1px;background:#ffffff;opacity:0.4"></i><i style="left:901px;top:150px;width:4px;background:#C586C0;opacity:0.4"></i><i style="left:906px;top:150px;width:1px;background:#ffffff;opacity:0.4"></i><i style="left:903px;top:152px;width:6px;background:#9CDCFE;opacity:0.4"></i><i style="left:909px;top:152px;width:1px;background:#ffffff;opacity:0.4"></i><i style="left:910px;top:152px;width:4px;background:#DCDCAA;opacity:0.4"></i><i style="left:914px;top:152px;width:1px;background:#ffffff;opacity:0.4"></i><i style="left:915px;top:152px;width:7px;background:#CE9178;opacity:0.4"></i><i style="left:923px;top:152px;width:1px;background:#ffffff;opacity:0.4"></i><i style="left:925px;top:152px;width:8px;background:#9CDCFE;opacity:0.4"></i><i style="left:934px;top:152px;width:1px;background:#ffffff;opacity:0.4"></i><i style="left:936px;top:152px;width:35px;background:#CE9178;opacity:0.4"></i><i style="left:971px;top:152px;width:2px;background:#ffffff;opacity:0.4"></i><i style="left:899px;top:154px;width:1px;background:#ffffff;opacity:0.4"></i><i style="left:899px;top:158px;width:6px;background:#C586C0;opacity:0.4"></i><i style="left:906px;top:158px;width:24px;background:#CE9178;opacity:0.4"></i><i style="left:930px;top:158px;width:1px;background:#ffffff;opacity:0.4"></i><i style="left:895px;top:160px;width:1px;background:#ffffff;opacity:0.4"></i><i style="left:891px;top:164px;width:1px;background:#ffffff;opacity:0.4"></i><i style="left:908px;top:110px;width:7px;height:3px;background:#fff;opacity:1"></i></div>
<div class="a" style="left:978px;top:58px;width:1px;height:844px;background:#1c1c1c;"></div>
<div class="a" style="left:979px;top:307px;width:17px;height:2px;background:#c8c8c8;"></div>
<div class="a" style="left:996px;top:0px;width:1px;height:902px;background:#6FC3DF;"></div>
<div class="a dot" style="left:1001px;top:-2px;width:226px;height:28px"></div>
<svg class="a" style="left:1017px;top:2px" width="12" height="12" viewBox="0 0 12 12"><path d="M0.2 1H10.7M0.2 4.4H6.2M0.2 7.5H10.7M0.2 10.6H8.2" stroke="#e0e0e0" stroke-width="1.3"/></svg>
<div class="t" style="left:1035.80px;top:0.36px;font-size:15.0px;line-height:19px;letter-spacing:0.231px;color:#fff;">CodeQL Query Results</div>
<svg class="a" style="left:1206.5px;top:2.5px" width="13" height="13" viewBox="0 0 13 13"><path d="M0.9 0.9L11.6 11.6M11.6 0.9L0.9 11.6" stroke="#fff" stroke-width="1.7"/></svg>
<div class="a" style="left:1231px;top:0px;width:1px;height:29px;background:#6FC3DF;"></div>
<div class="a" style="left:1580px;top:0px;width:1px;height:29px;background:#6FC3DF;"></div>
<svg class="a" style="left:1588px;top:5px" width="22" height="8" viewBox="0 0 22 8"><circle cx="5.5" cy="4" r="1.6" fill="#fff"/><circle cx="11.9" cy="4" r="1.6" fill="#fff"/><circle cx="18.1" cy="4" r="1.6" fill="#fff"/></svg>
<svg class="a" style="left:1028px;top:108px" width="30" height="18" viewBox="1028 108 30 18"><path d="M1037.4 112.3L1033.3 117L1037.4 121.7M1041.9 112.3L1037.8 117L1041.9 121.7" fill="none" stroke="#cccccc" stroke-width="2.1"/></svg>
<div class="t" style="left:1064.30px;top:104.60px;font-size:17.0px;line-height:21px;letter-spacing:0.000px;color:#fff;">1</div>
<div class="a" style="left:1058px;top:132px;width:52px;height:1.3px;background:#fff;"></div>
<div class="t" style="left:1112.90px;top:108.30px;font-size:15.0px;line-height:19px;letter-spacing:0.710px;color:#fff;">/ 1</div>
<svg class="a" style="left:1140px;top:108px" width="20" height="18" viewBox="1140 108 20 18"><path d="M1145.6 112.3L1149.7 117L1145.6 121.7M1150.1 112.3L1154.2 117L1150.1 121.7" fill="none" stroke="#cccccc" stroke-width="2.1"/></svg>
<div class="t" style="left:1198.80px;top:42.36px;font-size:15.0px;line-height:19px;letter-spacing:0.287px;color:#fff;">HTTP request type</div>
<div class="t" style="left:1198.80px;top:64.36px;font-size:15.0px;line-height:19px;letter-spacing:0.780px;color:#fff;">unprotected from</div>
<div class="t" style="left:1198.80px;top:86.36px;font-size:15.0px;line-height:19px;letter-spacing:-0.580px;color:#fff;">CSRF on</div>
<div class="t" style="left:1198.80px;top:108.36px;font-size:15.0px;line-height:19px;letter-spacing:0.357px;color:#fff;">mybatis_3_db -</div>
<div class="t" style="left:1198.80px;top:130.36px;font-size:15.0px;line-height:19px;letter-spacing:0.504px;color:#fff;">finished in 2</div>
<div class="t" style="left:1198.80px;top:152.36px;font-size:15.0px;line-height:19px;letter-spacing:0.204px;color:#fff;">seconds (6 results)</div>
<div class="t" style="left:1198.80px;top:174.36px;font-size:15.0px;line-height:19px;letter-spacing:0.456px;color:#fff;">[2025/8/3 15:31:17]</div>
<div class="t" style="left:1468.70px;top:98.36px;font-size:16.25px;line-height:20px;letter-spacing:-0.216px;color:#21A6FF;-webkit-text-stroke:0">Open</div>
<div class="t" style="left:1373.60px;top:116.16px;font-size:16.25px;line-height:20px;letter-spacing:-0.041px;color:#21A6FF;-webkit-text-stroke:0">CsrfUnprotectedRequestType.ql</div>
<div class="t" style="left:1026.00px;top:230.36px;font-size:15.0px;line-height:19px;letter-spacing:0.265px;color:#fff;">alerts</div>
<svg class="a" style="left:1082px;top:235px" width="12" height="8" viewBox="0 0 12 8"><path d="M1 1L6 6.2L11 1" fill="none" stroke="#fff" stroke-width="1.7"/></svg>
<div class="t" style="left:1131.70px;top:230.36px;font-size:15.0px;line-height:19px;letter-spacing:0.289px;color:#fff;">6 results</div>
<div class="a" style="left:1369px;top:234px;width:15px;height:14px;background:#fff;border:1px solid #9a9a9a;border-radius:3px"></div>
<div class="t" style="left:1388.80px;top:232.30px;font-size:15.0px;line-height:19px;letter-spacing:0.409px;color:#fff;">Show results in Problems view</div>
<div class="a" style="left:1021px;top:259px;width:583px;height:32px;background:#222222;"></div>
<div class="t" style="left:1267.50px;top:267.10px;font-size:15.0px;line-height:19px;letter-spacing:0.305px;color:#9a9a9a;">Message</div>
<div class="info" style="left:1027px;top:319.2px"></div>
<div class="t" style="left:1059.90px;top:297.36px;font-size:15.0px;line-height:19px;letter-spacing:0.327px;color:#fff;">Potential CSRF vulnerability due to using an HTTP</div>
<div class="t" style="left:1059.90px;top:319.30px;font-size:15.0px;line-height:19px;letter-spacing:0.533px;color:#fff;">request type which is not default-protected from CSRF</div>
<div class="t" style="left:1059.90px;top:341.30px;font-size:15.0px;line-height:19px;letter-spacing:0.547px;color:#fff;">for an apparent</div>
<div class="t" style="left:1175.00px;top:340.59px;font-size:15.6px;line-height:20px;letter-spacing:0.260px;color:#21A6FF;-webkit-text-stroke:0">state-changing action</div>
<div class="t" style="left:1330.50px;top:341.30px;font-size:15.0px;line-height:19px;letter-spacing:0.000px;color:#fff;">.</div>
<div class="t" style="left:1492.47px;top:318.51px;font-size:16.1px;line-height:20px;letter-spacing:0.000px;color:#21A6FF;-webkit-text-stroke:0">Jwt.java:32:19</div>
<div class="info" style="left:1027px;top:393.2px"></div>
<div class="t" style="left:1059.90px;top:371.36px;font-size:15.0px;line-height:19px;letter-spacing:0.327px;color:#fff;">Potential CSRF vulnerability due to using an HTTP</div>
<div class="t" style="left:1059.90px;top:393.30px;font-size:15.0px;line-height:19px;letter-spacing:0.533px;color:#fff;">request type which is not default-protected from CSRF</div>
<div class="t" style="left:1059.90px;top:415.30px;font-size:15.0px;line-height:19px;letter-spacing:0.547px;color:#fff;">for an apparent</div>
<div class="t" style="left:1175.00px;top:414.59px;font-size:15.6px;line-height:20px;letter-spacing:0.260px;color:#21A6FF;-webkit-text-stroke:0">state-changing action</div>
<div class="t" style="left:1330.50px;top:415.30px;font-size:15.0px;line-height:19px;letter-spacing:0.000px;color:#fff;">.</div>
<div class="t" style="left:1477.24px;top:392.51px;font-size:16.1px;line-height:20px;letter-spacing:-0.000px;color:#21A6FF;-webkit-text-stroke:0">Login.java:28:19</div>
<div class="info" style="left:1027px;top:467.2px"></div>
<div class="t" style="left:1059.90px;top:445.36px;font-size:15.0px;line-height:19px;letter-spacing:0.327px;color:#fff;">Potential CSRF vulnerability due to using an HTTP</div>
<div class="t" style="left:1059.90px;top:467.30px;font-size:15.0px;line-height:19px;letter-spacing:0.533px;color:#fff;">request type which is not default-protected from CSRF</div>
<div class="t" style="left:1059.90px;top:489.30px;font-size:15.0px;line-height:19px;letter-spacing:0.547px;color:#fff;">for an apparent</div>
<div class="t" style="left:1175.00px;top:488.59px;font-size:15.6px;line-height:20px;letter-spacing:0.260px;color:#21A6FF;-webkit-text-stroke:0">state-changing action</div>
<div class="t" style="left:1330.50px;top:489.30px;font-size:15.0px;line-height:19px;letter-spacing:0.000px;color:#fff;">.</div>
<div class="t" style="left:1475.47px;top:466.51px;font-size:16.1px;line-height:20px;letter-spacing:0.000px;color:#21A6FF;-webkit-text-stroke:0">SSRF.java:45:19</div>
<div class="info" style="left:1027px;top:541.2px"></div>
<div class="t" style="left:1059.90px;top:519.35px;font-size:15.0px;line-height:19px;letter-spacing:0.327px;color:#fff;">Potential CSRF vulnerability due to using an HTTP</div>
<div class="t" style="left:1059.90px;top:541.29px;font-size:15.0px;line-height:19px;letter-spacing:0.533px;color:#fff;">request type which is not default-protected from CSRF</div>
<div class="t" style="left:1059.90px;top:563.29px;font-size:15.0px;line-height:19px;letter-spacing:0.547px;color:#fff;">for an apparent</div>
<div class="t" style="left:1175.00px;top:562.59px;font-size:15.6px;line-height:20px;letter-spacing:0.260px;color:#21A6FF;-webkit-text-stroke:0">state-changing action</div>
<div class="t" style="left:1330.50px;top:563.29px;font-size:15.0px;line-height:19px;letter-spacing:0.000px;color:#fff;">.</div>
<div class="t" style="left:1475.47px;top:540.51px;font-size:16.1px;line-height:20px;letter-spacing:0.000px;color:#21A6FF;-webkit-text-stroke:0">SSRF.java:51:19</div>
<div class="info" style="left:1027px;top:615.2px"></div>
<div class="t" style="left:1059.90px;top:593.35px;font-size:15.0px;line-height:19px;letter-spacing:0.327px;color:#fff;">Potential CSRF vulnerability due to using an HTTP</div>
<div class="t" style="left:1059.90px;top:615.29px;font-size:15.0px;line-height:19px;letter-spacing:0.533px;color:#fff;">request type which is not default-protected from CSRF</div>
<div class="t" style="left:1059.90px;top:637.29px;font-size:15.0px;line-height:19px;letter-spacing:0.547px;color:#fff;">for an apparent</div>
<div class="t" style="left:1175.00px;top:636.59px;font-size:15.6px;line-height:20px;letter-spacing:0.260px;color:#21A6FF;-webkit-text-stroke:0">state-changing action</div>
<div class="t" style="left:1330.50px;top:637.29px;font-size:15.0px;line-height:19px;letter-spacing:0.000px;color:#fff;">.</div>
<div class="t" style="left:1475.47px;top:614.51px;font-size:16.1px;line-height:20px;letter-spacing:0.000px;color:#21A6FF;-webkit-text-stroke:0">SSRF.java:75:19</div>
<div class="info" style="left:1027px;top:690.2px"></div>
<div class="t" style="left:1059.90px;top:668.35px;font-size:15.0px;line-height:19px;letter-spacing:0.327px;color:#fff;">Potential CSRF vulnerability due to using an HTTP</div>
<div class="t" style="left:1059.90px;top:690.29px;font-size:15.0px;line-height:19px;letter-spacing:0.533px;color:#fff;">request type which is not default-protected from CSRF</div>
<div class="t" style="left:1059.90px;top:712.29px;font-size:15.0px;line-height:19px;letter-spacing:0.547px;color:#fff;">for an apparent</div>
<div class="t" style="left:1175.00px;top:711.59px;font-size:15.6px;line-height:20px;letter-spacing:0.260px;color:#21A6FF;-webkit-text-stroke:0">state-changing action</div>
<div class="t" style="left:1330.50px;top:712.29px;font-size:15.0px;line-height:19px;letter-spacing:0.000px;color:#fff;">.</div>
<div class="t" style="left:1475.47px;top:689.51px;font-size:16.1px;line-height:20px;letter-spacing:0.000px;color:#21A6FF;-webkit-text-stroke:0">SSRF.java:88:19</div>
</body></html>
